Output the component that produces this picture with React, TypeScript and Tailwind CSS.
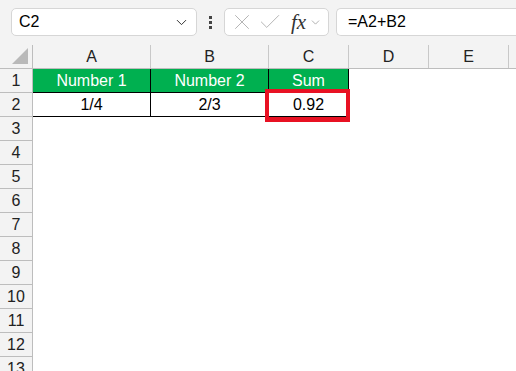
import { ChevronDown, X, Check } from "lucide-react";

const cols = [
  { name: "A", w: "w-[118px]" },
  { name: "B", w: "w-[118px]" },
  { name: "C", w: "w-[80px]" },
  { name: "D", w: "w-[80px]" },
  { name: "E", w: "w-[80px]" },
];

const rows = Array.from({ length: 13 }, (_, i) => i + 1);

function Cell({ r, c }: { r: number; c: number }) {
  const w = cols[c].w;
  if (r === 1 && c < 3) {
    const label = ["Number 1", "Number 2", "Sum"][c];
    return (
      <div className={`${w} h-full shrink-0 bg-[#00b050] text-white border-r border-b border-black flex items-center justify-center`}>
        {label}
      </div>
    );
  }
  if (r === 2 && c < 3) {
    const value = ["1/4", "2/3", "0.92"][c];
    return (
      <div className={`${w} h-full shrink-0 relative bg-white border-r border-b border-black flex items-center justify-center text-black`}>
        {value}
        {c === 2 && (
          <div className="absolute left-[-4px] right-[-2px] top-[-4px] bottom-[-6px] border-4 border-b-[5px] border-[#e81123]" />
        )}
      </div>
    );
  }
  return <div className={`${w} h-full shrink-0 bg-white`} />;
}

export default function App() {
  return (
    <div
      className="w-[516px] h-[371px] overflow-hidden bg-[#f3f3f3] text-[16px] text-[#222]"
      style={{ fontFamily: '"Liberation Sans", Arial, sans-serif' }}
    >
      {/* formula bar */}
      <div className="flex items-center h-[28px] mt-2 mb-[9px]">
        <div className="ml-[11px] w-[186px] h-full bg-white border border-[#d6d6d6] rounded-[5px] flex items-center justify-between pl-[7px] pr-[6px]">
          <span className="text-[16px] text-black">C2</span>
          <ChevronDown size={17} strokeWidth={1.4} className="text-[#333]" />
        </div>
        <div className="w-[27px] flex flex-col items-center gap-[2px]">
          <span className="w-[3px] h-[3px] bg-[#444]" />
          <span className="w-[3px] h-[3px] bg-[#444]" />
          <span className="w-[3px] h-[3px] bg-[#444]" />
        </div>
        <div className="w-[105px] h-full bg-white border border-[#d6d6d6] rounded-[5px] flex items-center pl-[4px]">
          <X size={26} strokeWidth={0.9} className="text-[#b3b3b3]" />
          <Check size={26} strokeWidth={0.9} className="text-[#b3b3b3] ml-[2px]" />
          <span
            className="ml-[8px] text-[21px] italic text-[#333] leading-none"
            style={{ fontFamily: '"Liberation Serif", "Times New Roman", serif' }}
          >
            fx
          </span>
          <ChevronDown size={13} strokeWidth={1.4} className="text-[#999] ml-[3px]" />
        </div>
        <div className="ml-[7px] flex-1 h-full bg-white border border-r-0 border-[#d6d6d6] rounded-l-[5px] flex items-center pl-[11px]">
          <span className="text-[16px] text-black">=A2+B2</span>
        </div>
      </div>

      {/* column headers */}
      <div className="flex h-[24px] border-b border-[#bdbdbd]">
        <div className="w-[33px] h-full shrink-0 border-r border-[#bdbdbd] relative">
          <div
            className="absolute right-[4px] bottom-[4px] w-[16px] h-[16px] bg-[#b9b9b9]"
            style={{ clipPath: "polygon(100% 0, 100% 100%, 0 100%)" }}
          />
        </div>
        {cols.map((c) => (
          <div
            key={c.name}
            className={`${c.w} h-full shrink-0 border-r border-[#c8c8c8] flex items-center justify-center`}
          >
            {c.name}
          </div>
        ))}
      </div>

      {/* rows */}
      {rows.map((r) => (
        <div key={r} className="flex h-[24px]">
          <div className="w-[33px] h-full shrink-0 border-r border-b border-[#bdbdbd] flex items-center justify-center">
            {r}
          </div>
          {cols.map((_, c) => (
            <Cell key={c} r={r} c={c} />
          ))}
          <div className="flex-1 h-full bg-white" />
        </div>
      ))}
    </div>
  );
}
